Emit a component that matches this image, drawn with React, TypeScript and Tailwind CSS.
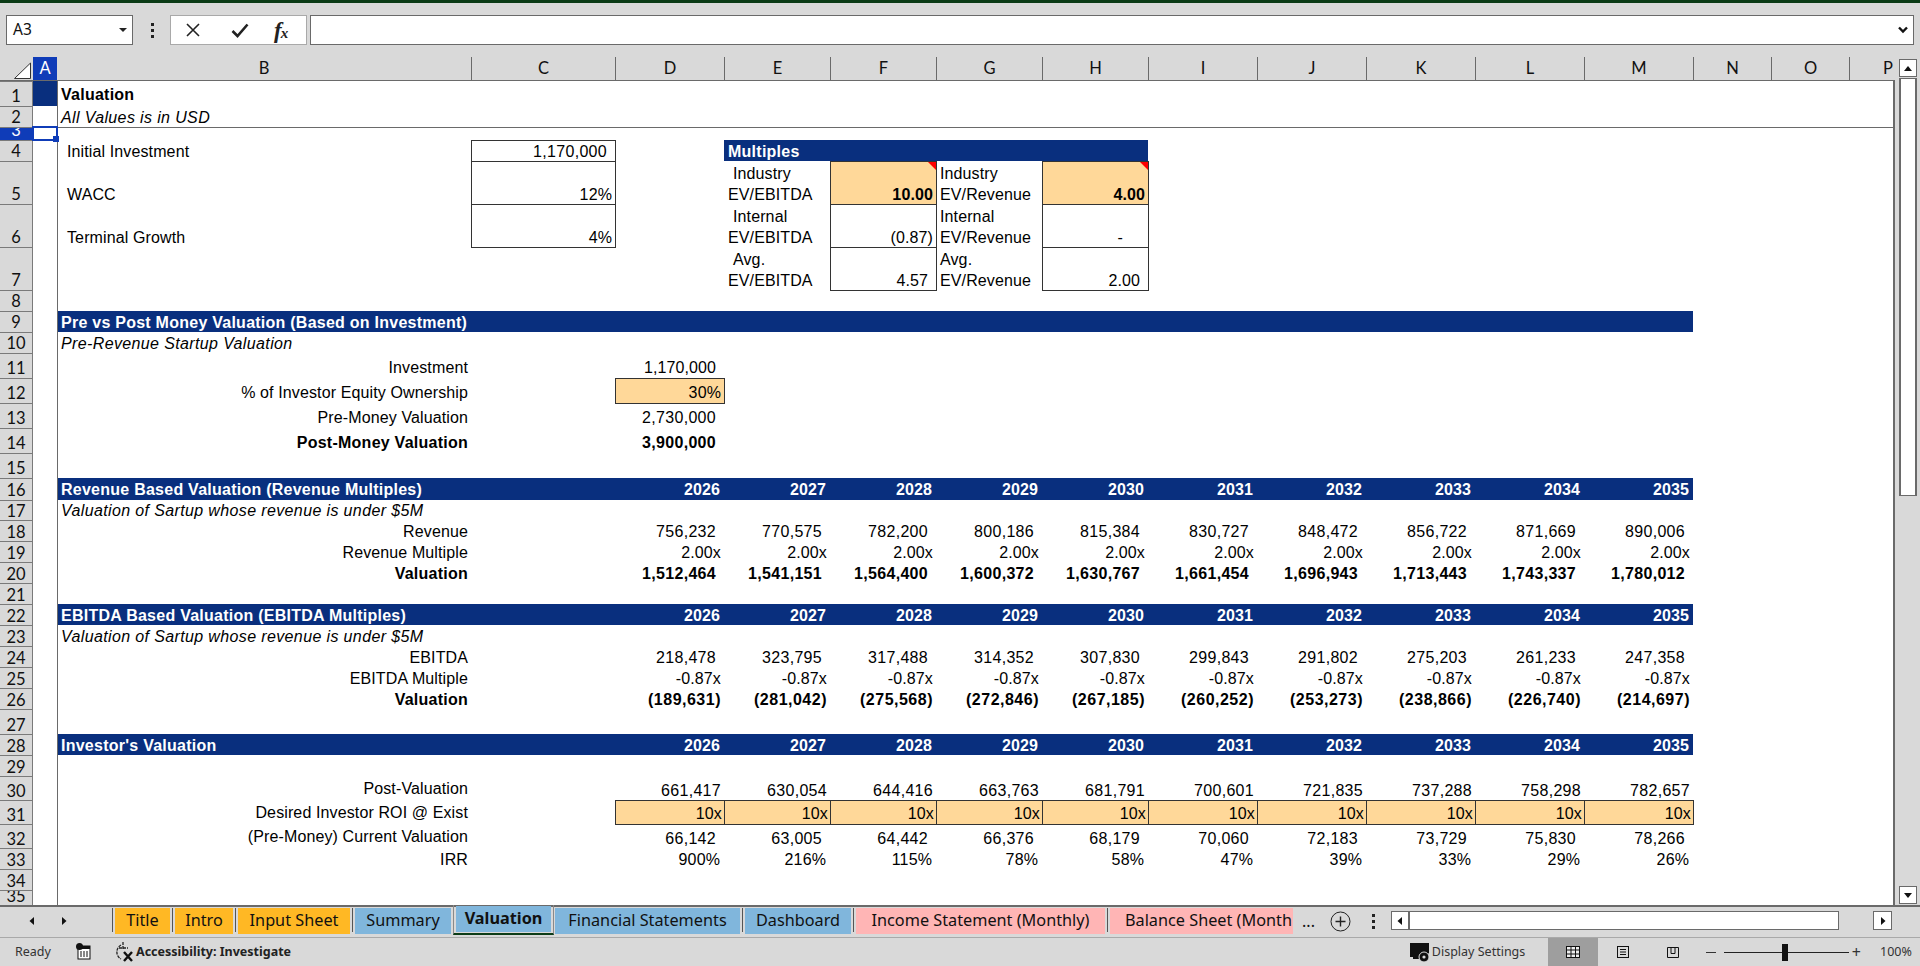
import type { ReactNode } from "react";

const cols = "grid-cols-[33px_24px_414px_144px_109px_106px_106px_106px_106px_109px_109px_109px_109px_109px_78px_78px_45px]";
const left = "items-end pl-[3px]";
const label = "items-end justify-end pr-[3px]";
const labelMid = "items-center justify-end pr-[3px]";
const band = "bg-[#092f7e] text-white font-bold tracking-[0.25px] items-end pl-[3px]";
const slant = "italic tracking-[0.37px]";
const heavy = "font-bold tracking-[0.25px]";
const money = "pr-[8px] tracking-[0.3px]";

const years = ["2026", "2027", "2028", "2029", "2030", "2031", "2032", "2033", "2034", "2035"];

const Num = ({ children, className = money }: { children?: ReactNode; className?: string }) => (
    <div className={`flex items-end justify-end whitespace-nowrap ${className}`}>{children}</div>
);

const Box = ({ children, className = "" }: { children?: ReactNode; className?: string }) => (
    <div className={`relative flex items-end justify-end -mr-px -mb-px border border-[#333333] ${className}`}>{children}</div>
);

const Vals = ({ items, className }: { items: string[]; className?: string }) => (
    <>
        {items.map((v, i) => (
            <Num key={i} className={className}>{v}</Num>
        ))}
    </>
);

const Years = () => (
    <>
        <div className="bg-[#092f7e]" />
        {years.map((y) => (
            <Num key={y} className="pr-[4px] bg-[#092f7e] text-white font-bold">{y}</Num>
        ))}
    </>
);

const Flag = () => (
    <div className="absolute top-0 right-0 size-[8px] bg-[#ff0000] [clip-path:polygon(0_0,100%_0,100%_100%)]" />
);

const TwoLine = ({ top, bottom, indent = "" }: { top: string; bottom: string; indent?: string }) => (
    <div className="flex flex-col justify-end -mb-px pl-[4px] whitespace-nowrap">
        <span className={indent}>{top}</span>
        <span>{bottom}</span>
    </div>
);

type RowProps = {
    n: number;
    h: string;
    b?: ReactNode;
    bClass?: string;
    aClass?: string;
    active?: boolean;
    children?: ReactNode;
};

const Row = ({ n, h, b, bClass = "", aClass = "", active = false, children }: RowProps) => (
    <div className={`grid grid-rows-1 ${cols} ${h}`}>
        <div
            className={`flex items-end justify-center overflow-hidden border-t border-r border-[#7a7a7a] font-['Lato',sans-serif] text-[16.5px] tracking-normal ${
                n >= 17 ? "leading-[18px]" : "leading-[20px]"
            } ${active ? "bg-[#0f3cb8] text-white" : "bg-[#d9d9d9] text-[#111111]"}`}
        >
            {n}
        </div>
        <div className={`relative ${aClass}`}>
            {active && (
                <div className="absolute -left-[1px] -top-[1px] z-10 h-[15px] w-[26px] border-2 border-[#0f3cb8]">
                    <div className="absolute -right-[3px] -bottom-[3px] size-[6px] bg-[#0f3cb8]" />
                </div>
            )}
        </div>
        <div className={`flex whitespace-nowrap border-l border-[#6a6a6a] ${bClass}`}>{b}</div>
        {children}
    </div>
);

const ColHead = ({ children, className = "" }: { children?: ReactNode; className?: string }) => (
    <div className={`flex items-center justify-center overflow-hidden border-l border-[#6a6a6a] ${className}`}>{children}</div>
);

const Header = () => (
    <div className={`grid grid-rows-1 h-[24px] border-b border-[#6a6a6a] bg-[#d9d9d9] font-['Lato',sans-serif] text-[16.5px] text-[#111111] ${cols}`}>
        <div className="flex items-end">
            <svg width="33" height="22" viewBox="0 0 33 22">
                <path d="M14.5 20.5 L30.5 5 V20.5 Z" fill="#fff" stroke="#333" strokeWidth="1" />
            </svg>
        </div>
        <div className="flex items-center justify-center bg-[#0f3cb8] text-white">A</div>
        <div className="flex items-center justify-center">B</div>
        {["C", "D", "E", "F", "G", "H", "I", "J", "K", "L", "M", "N", "O"].map((c) => (
            <ColHead key={c}>{c}</ColHead>
        ))}
        <ColHead className="justify-end pr-[1px]">P</ColHead>
    </div>
);

const Sheet = () => (
    <div className="w-[1895px] overflow-hidden border-r-2 border-[#6a6a6a] bg-white font-['Liberation_Sans',Arial,sans-serif] text-[16px] leading-[21px] tracking-[0.12px] text-black">
        <Row n={1} h="h-[25px]" aClass="bg-[#092f7e]" bClass={`col-span-15 pb-[1px] ${heavy} ${left}`} b="Valuation" />
        <Row n={2} h="h-[21px]" bClass={`col-span-15 -mb-px border-b leading-[19px] ${slant} ${left}`} b="All Values is in USD" />
        <Row n={3} h="h-[13px]" active />
        <Row n={4} h="h-[21px]" bClass="items-end pl-[9px] leading-[19px]" b="Initial Investment">
            <Box className={`leading-[19px] ${money}`}>1,170,000</Box>
            <div />
            <div className={`col-span-4 flex leading-[19px] ${band} pl-[4px]`}>Multiples</div>
        </Row>
        <Row n={5} h="h-[43px]" bClass="items-end pl-[9px] leading-[19px]" b="WACC">
            <Box className="pr-[3px] leading-[19px]">12%</Box>
            <div />
            <TwoLine top="Industry" bottom="EV/EBITDA" indent="pl-[5px]" />
            <Box className="bg-[#ffd899] pr-[3px] leading-[19px] font-bold">10.00<Flag /></Box>
            <TwoLine top="Industry" bottom="EV/Revenue" />
            <Box className="bg-[#ffd899] pr-[3px] leading-[19px] font-bold">4.00<Flag /></Box>
        </Row>
        <Row n={6} h="h-[43px]" bClass="items-end pl-[9px] leading-[19px]" b="Terminal Growth">
            <Box className="pr-[3px] leading-[19px]">4%</Box>
            <div />
            <TwoLine top="Internal" bottom="EV/EBITDA" indent="pl-[5px]" />
            <Box className="pr-[3px] leading-[19px]">(0.87)</Box>
            <TwoLine top="Internal" bottom="EV/Revenue" />
            <Box className="pr-[25px] leading-[19px]">-</Box>
        </Row>
        <Row n={7} h="h-[43px]">
            <div />
            <div />
            <TwoLine top="Avg." bottom="EV/EBITDA" indent="pl-[5px]" />
            <Box className="pr-[8px] leading-[19px]">4.57</Box>
            <TwoLine top="Avg." bottom="EV/Revenue" />
            <Box className="pr-[8px] leading-[19px]">2.00</Box>
        </Row>
        <Row n={8} h="h-[21px]" />
        <Row n={9} h="h-[21px]" bClass={`leading-[19px] ${band}`} b="Pre vs Post Money Valuation (Based on Investment)">
            <div className="col-span-11 bg-[#092f7e]" />
        </Row>
        <Row n={10} h="h-[21px]" bClass={`leading-[19px] ${slant} ${left}`} b="Pre-Revenue Startup Valuation" />
        <Row n={11} h="h-[25px]" bClass={label} b="Investment">
            <div />
            <Num className="pr-[8px] tracking-[0.1px]">1,170,000</Num>
        </Row>
        <Row n={12} h="h-[25px]" bClass={label} b="% of Investor Equity Ownership">
            <div />
            <Box className="bg-[#ffd899] pr-[3px]">30%</Box>
        </Row>
        <Row n={13} h="h-[25px]" bClass={label} b="Pre-Money Valuation">
            <div />
            <Num>2,730,000</Num>
        </Row>
        <Row n={14} h="h-[25px]" bClass={`${heavy} ${label}`} b="Post-Money Valuation">
            <div />
            <Num className={`${money} font-bold`}>3,900,000</Num>
        </Row>
        <Row n={15} h="h-[25px]" />
        <Row n={16} h="h-[22px]" bClass={band} b="Revenue Based Valuation (Revenue Multiples)">
            <Years />
        </Row>
        <div className="leading-[19px]">
            <Row n={17} h="h-[20px]" bClass={`${slant} ${left}`} b="Valuation of Sartup whose revenue is under $5M" />
            <Row n={18} h="h-[21px]" bClass={label} b="Revenue">
                <div />
                <Vals className={money} items={["756,232", "770,575", "782,200", "800,186", "815,384", "830,727", "848,472", "856,722", "871,669", "890,006"]} />
            </Row>
            <Row n={19} h="h-[21px]" bClass={label} b="Revenue Multiple">
                <div />
                <Vals className="pr-[3px]" items={years.map(() => "2.00x")} />
            </Row>
            <Row n={20} h="h-[21px]" bClass={`${heavy} ${label}`} b="Valuation">
                <div />
                <Vals className={`${money} font-bold`} items={["1,512,464", "1,541,151", "1,564,400", "1,600,372", "1,630,767", "1,661,454", "1,696,943", "1,713,443", "1,743,337", "1,780,012"]} />
            </Row>
            <Row n={21} h="h-[21px]" />
            <Row n={22} h="h-[21px]" bClass={band} b="EBITDA Based Valuation (EBITDA Multiples)">
                <Years />
            </Row>
            <Row n={23} h="h-[21px]" bClass={`${slant} ${left}`} b="Valuation of Sartup whose revenue is under $5M" />
            <Row n={24} h="h-[21px]" bClass={label} b="EBITDA">
                <div />
                <Vals className={money} items={["218,478", "323,795", "317,488", "314,352", "307,830", "299,843", "291,802", "275,203", "261,233", "247,358"]} />
            </Row>
            <Row n={25} h="h-[21px]" bClass={label} b="EBITDA Multiple">
                <div />
                <Vals className="pr-[3px]" items={years.map(() => "-0.87x")} />
            </Row>
            <Row n={26} h="h-[21px]" bClass={`${heavy} ${label}`} b="Valuation">
                <div />
                <Vals className="pr-[3px] font-bold tracking-[0.5px]" items={["(189,631)", "(281,042)", "(275,568)", "(272,846)", "(267,185)", "(260,252)", "(253,273)", "(238,866)", "(226,740)", "(214,697)"]} />
            </Row>
            <Row n={27} h="h-[25px]" />
            <Row n={28} h="h-[21px]" bClass={band} b="Investor's Valuation">
                <Years />
            </Row>
            <Row n={29} h="h-[21px]" />
            <Row n={30} h="h-[24px]" bClass={labelMid} b="Post-Valuation">
                <div />
                <Vals className="pr-[3px] tracking-[0.3px]" items={["661,417", "630,054", "644,416", "663,763", "681,791", "700,601", "721,835", "737,288", "758,298", "782,657"]} />
            </Row>
            <Row n={31} h="h-[24px]" bClass={labelMid} b="Desired Investor ROI @ Exist">
                <div />
                {years.map((y) => (
                    <Box key={y} className="bg-[#ffd899] pr-[2px] leading-[21px]">10x</Box>
                ))}
            </Row>
            <Row n={32} h="h-[24px]" bClass={labelMid} b="(Pre-Money) Current Valuation">
                <div />
                <Vals className={money} items={["66,142", "63,005", "64,442", "66,376", "68,179", "70,060", "72,183", "73,729", "75,830", "78,266"]} />
            </Row>
            <Row n={33} h="h-[21px]" bClass={label} b="IRR">
                <div />
                <Vals className="pr-[4px]" items={["900%", "216%", "115%", "78%", "58%", "47%", "39%", "33%", "29%", "26%"]} />
            </Row>
            <Row n={34} h="h-[21px]" />
            <Row n={35} h="h-[15px]" />
        </div>
    </div>
);

const Tri = ({ dir, size = 8 }: { dir: "up" | "down" | "left" | "right"; size?: number }) => {
    const d = { up: "M0 7 L4 2 L8 7 Z", down: "M0 2 L8 2 L4 7 Z", left: "M6 0 V8 L1.5 4 Z", right: "M2 0 V8 L6.5 4 Z" }[dir];
    return (
        <svg width={size} height={size} viewBox="0 0 8 8">
            <path d={d} fill="#111" />
        </svg>
    );
};

const ScrollBtn = ({ dir, className = "" }: { dir: "up" | "down" | "left" | "right"; className?: string }) => (
    <div className={`flex items-center justify-center border border-[#6a6a6a] bg-white ${className}`}>
        <Tri dir={dir} />
    </div>
);

const VScroll = () => (
    <div className="flex w-[25px] flex-col pl-[4px] pr-[3px] pt-[2px] pb-[1px]">
        <ScrollBtn dir="up" className="h-[18px]" />
        <div className="mt-[1px] h-[418px] border-x-2 border-y border-[#6a6a6a] bg-white" />
        <div className="flex-1" />
        <ScrollBtn dir="down" className="h-[18px]" />
    </div>
);

const Dots = ({ className = "" }: { className?: string }) => (
    <div className={`flex flex-col items-center gap-[3px] ${className}`}>
        <div className="size-[3px] bg-[#222222]" />
        <div className="size-[3px] bg-[#222222]" />
        <div className="size-[3px] bg-[#222222]" />
    </div>
);

const FormulaBar = () => (
    <div className="flex h-[54px] items-start bg-[#d9d9d9] pl-[6px] pt-[12px]">
        <div className="flex h-[30px] w-[127px] items-center justify-between border border-[#6a6a6a] bg-white pl-[6px] pr-[5px] font-['Noto_Sans',sans-serif] text-[15.5px] text-[#111111]">
            <span>A3</span>
            <svg width="8" height="6" viewBox="0 0 8 6"><path d="M0 1 H8 L4 5 Z" fill="#222" /></svg>
        </div>
        <div className="flex h-[30px] w-[37px] items-center justify-center">
            <Dots className="ml-[1px]" />
        </div>
        <div className="relative flex h-[30px] w-[137px] items-center border border-[#a9a9a9] bg-white">
            <svg className="ml-[14px]" width="16" height="16" viewBox="0 0 16 16">
                <path d="M2 2 L14 14 M14 2 L2 14" stroke="#222" strokeWidth="1.6" fill="none" />
            </svg>
            <svg className="ml-[30px]" width="18" height="16" viewBox="0 0 18 16">
                <path d="M1.5 9 L6.5 14 L16.5 2.5" stroke="#222" strokeWidth="2.6" fill="none" />
            </svg>
            <span className="ml-[25px] font-['Liberation_Serif',serif] text-[23px] font-bold italic leading-none text-[#222222]">
                f<span className="-ml-[1px] text-[15px]">x</span>
            </span>
        </div>
        <div className="ml-[3px] flex h-[30px] w-[1604px] items-center justify-end border border-[#6a6a6a] bg-white pr-[5px]">
            <svg width="10" height="8" viewBox="0 0 10 8">
                <path d="M1 1.5 L5 5.5 L9 1.5" stroke="#111" strokeWidth="2.4" fill="none" />
            </svg>
        </div>
    </div>
);

const Divider = () => (
    <div className="flex w-[5px] justify-center">
        <div className="h-[24px] w-px bg-[#555555]" />
    </div>
);

const Tab = ({ label: text, className, w }: { label: string; className: string; w: string }) => (
    <div className={`flex h-[26px] items-center justify-center overflow-hidden whitespace-nowrap ${w} ${className}`}>{text}</div>
);

const orange = "bg-[#ffb824] pb-[2px]";
const blue = "bg-[#80b6dc] pb-[2px]";
const pink = "bg-[#ffb5b5] pb-[2px]";

const TabBar = () => (
    <div className="flex h-[32px] items-start border-t-2 border-[#6a6a6a] bg-[#d9d9d9] pt-[1px] font-['Noto_Sans',sans-serif] text-[16.25px] text-[#111111]">
        <div className="flex h-[26px] w-[110px] items-center gap-[24px] pl-[28px]">
            <Tri dir="left" />
            <Tri dir="right" />
        </div>
        <Divider />
        <Tab label="Title" className={orange} w="w-[55px]" />
        <Divider />
        <Tab label="Intro" className={orange} w="w-[58px]" />
        <Divider />
        <Tab label="Input Sheet" className={orange} w="w-[112px]" />
        <Divider />
        <Tab label="Summary" className={blue} w="w-[96px]" />
        <div className="-mt-[3px] ml-[2px] mr-[1px] flex h-[30px] w-[101px] items-end justify-center border-x border-b-2 border-x-[#8a8a8a] border-b-[#0b3b16] px-[2px] pb-[1px]">
            <Tab label="Valuation" className="w-full bg-[#80b6dc] pb-[1px] font-bold" w="" />
        </div>
        <Tab label="Financial Statements" className={blue} w="w-[185px]" />
        <Divider />
        <Tab label="Dashboard" className={blue} w="w-[106px]" />
        <Divider />
        <Tab label="Income Statement (Monthly)" className={pink} w="w-[249px]" />
        <Divider />
        <div className={`flex h-[26px] w-[183px] items-center overflow-hidden whitespace-nowrap pl-[15px] ${pink}`}>Balance Sheet (Month</div>
        <div className="flex h-[26px] w-[31px] items-center justify-center text-[16px]">...</div>
        <div className="flex h-[26px] w-[33px] items-center justify-center">
            <svg width="21" height="21" viewBox="0 0 21 21">
                <circle cx="10.5" cy="10.5" r="9.5" fill="none" stroke="#222" />
                <path d="M10.5 5.5 V15.5 M5.5 10.5 H15.5" stroke="#222" strokeWidth="1.4" />
            </svg>
        </div>
        <div className="flex h-[26px] w-[32px] items-center justify-center">
            <Dots />
        </div>
        <div className="mt-[3px] ml-[2px] flex h-[19px] w-[448px] border border-[#6a6a6a] bg-white">
            <div className="flex w-[18px] items-center justify-center border-r-2 border-[#6a6a6a]">
                <Tri dir="left" />
            </div>
        </div>
        <ScrollBtn dir="right" className="mt-[3px] ml-[34px] h-[19px] w-[19px]" />
    </div>
);

const StatusBar = () => (
    <div className="flex h-[29px] items-center border-t border-[#a9a9a9] bg-[#d9d9d9] pl-[15px] font-['Noto_Sans',sans-serif] text-[12.5px] text-[#333333]">
        <span className="w-[61px]">Ready</span>
        <svg className="w-[38px]" width="16" height="18" viewBox="0 0 38 18" preserveAspectRatio="xMinYMid meet">
            <rect x="2" y="3" width="12" height="13" fill="#fff" stroke="#111" />
            <path d="M2 3 H14 V6 H2 Z" fill="#111" />
            <circle cx="3.5" cy="3.5" r="3.5" fill="#111" />
            <path d="M4 9 H6 M7 9 H9 M10 9 H12 M4 11 H6 M7 11 H9 M10 11 H12 M4 13 H6 M7 13 H9 M10 13 H12" stroke="#111" />
        </svg>
        <svg width="20" height="22" viewBox="0 0 20 22">
            <path d="M7 4 A8 8 0 0 0 7 18 M9 1 V9 M5 7 H14" stroke="#222" strokeWidth="1.3" fill="none" strokeDasharray="3 1" />
            <path d="M10 11 L18 20 M18 11 L10 20" stroke="#111" strokeWidth="2.4" />
        </svg>
        <span className="ml-[2px] font-bold text-[#222222]">Accessibility: Investigate</span>
        <div className="flex-1" />
        <svg width="21" height="21" viewBox="0 0 21 21">
            <path d="M0 1 H19 V11 L13 15 H9 V17 H3 V15 H0 Z" fill="#111" />
            <circle cx="14" cy="15" r="5" fill="#111" stroke="#d9d9d9" />
            <circle cx="14" cy="15" r="1.6" fill="#d9d9d9" />
        </svg>
        <span className="ml-[1px] w-[116px]">Display Settings</span>
        <div className="flex h-full w-[50px] items-center justify-center bg-[#9e9e9e]">
            <svg width="14" height="12" viewBox="0 0 14 12">
                <rect x="0.5" y="0.5" width="13" height="11" fill="#eee" stroke="#111" />
                <path d="M0.5 4 H13.5 M0.5 8 H13.5 M5 0.5 V11.5 M9.5 0.5 V11.5" stroke="#111" />
            </svg>
        </div>
        <div className="flex h-full w-[50px] items-center justify-center">
            <svg width="12" height="12" viewBox="0 0 12 12">
                <rect x="0.5" y="0.5" width="11" height="11" fill="none" stroke="#111" />
                <path d="M3 3.5 H9 M3 6 H9 M3 8.5 H9" stroke="#111" />
            </svg>
        </div>
        <div className="flex h-full w-[50px] items-center justify-center">
            <svg width="12" height="11" viewBox="0 0 12 11">
                <path d="M0.5 0.5 H11.5 V10.5 H0.5 Z M4 0.5 V6.5 H8 V0.5" fill="none" stroke="#111" />
            </svg>
        </div>
        <div className="ml-[8px] h-px w-[10px] bg-[#333333]" />
        <div className="relative ml-[8px] h-px w-[125px] bg-[#222222]">
            <div className="absolute -top-[8px] left-[58px] h-[17px] w-[6px] bg-[#111111]" />
        </div>
        <div className="ml-[3px] text-[16px] leading-none">+</div>
        <span className="ml-[19px] w-[40px]">100%</span>
    </div>
);

export default function App() {
    return (
        <div className="flex h-[966px] w-[1920px] flex-col overflow-hidden bg-[#d9d9d9]">
            <div className="h-[3px] bg-[#0b3b16]" />
            <FormulaBar />
            <div className="flex h-[848px]">
                <div className="flex w-[1895px] flex-col">
                    <Header />
                    <Sheet />
                </div>
                <VScroll />
            </div>
            <TabBar />
            <StatusBar />
        </div>
    );
}
